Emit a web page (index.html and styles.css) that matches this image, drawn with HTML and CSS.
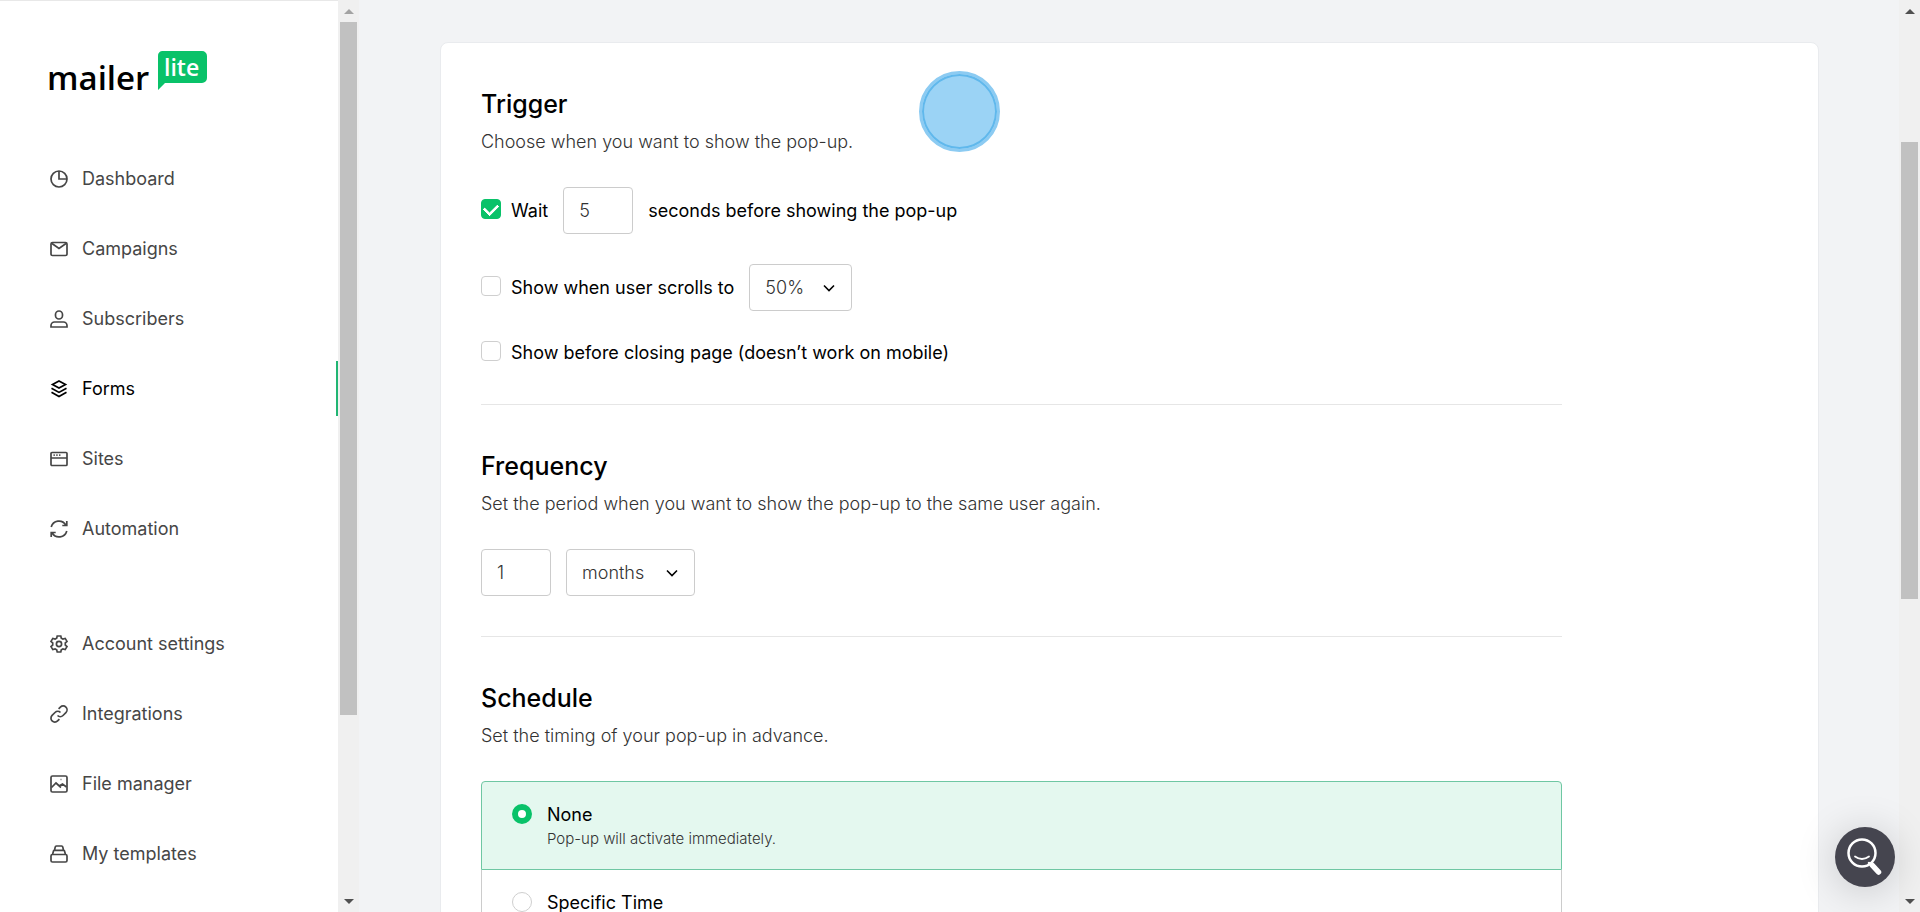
FILE: index.html
```
<!DOCTYPE html>
<html lang="en">
<head>
  <meta charset="UTF-8">
  <title>MailerLite - Pop-up settings</title>
  <link rel="stylesheet" href="styles.css">
</head>
<body>
  <div class="app">
    <aside class="sidebar">
      <a href="#" class="logo" aria-label="MailerLite">
        <svg width="160" height="42" viewBox="0 0 160 42">
          <text class="logo-mailer" x="-3" y="39">mailer</text>
          <path fill="#09c269" d="M112 0h40a5 5 0 0 1 5 5v22a5 5 0 0 1-5 5h-37l-7 7V5a5 5 0 0 1 4-5z"/>
          <text class="logo-lite" x="114" y="25">lite</text>
        </svg>
      </a>

      <nav class="menu">
        <a href="#" class="menu-item">
          <svg class="icon" viewBox="0 0 18 18"><circle cx="9" cy="9" r="8"/><path d="M9 1v8h8"/></svg>
          Dashboard
        </a>
        <a href="#" class="menu-item">
          <svg class="icon" viewBox="0 0 18 18"><rect x="1" y="2.500" width="16" height="13" rx="1.500"/><path d="M2 3.500l7 5 7-5"/></svg>
          Campaigns
        </a>
        <a href="#" class="menu-item">
          <svg class="icon" viewBox="0 0 18 18"><rect x="5.500" y="1" width="7" height="8" rx="3.500"/><path d="M1 17v-1.500a3.500 3.500 0 0 1 3.500-3.500h9a3.500 3.500 0 0 1 3.500 3.500V17z"/></svg>
          Subscribers
        </a>
        <a href="#" class="menu-item active">
          <svg class="icon" viewBox="0 0 18 18"><path d="M9 1l6.500 3.500L9 8 2.500 4.500zM1.500 8.200L9 12.400l7.500-4.200M1.500 12.200L9 16.500l7.500-4.300"/></svg>
          Forms
        </a>
        <a href="#" class="menu-item">
          <svg class="icon" viewBox="0 0 18 18"><rect x="1" y="2.500" width="16" height="13" rx="1"/><path d="M1 8h16M3.500 5.200h1.300M6.300 5.200h1.300M9.100 5.200h1.300"/></svg>
          Sites
        </a>
        <a href="#" class="menu-item">
          <svg class="icon" viewBox="0 0 18 18"><path d="M1.200 7A8 8 0 0 1 15.800 5M16.800 1v4.500h-4.500M16.800 11A8 8 0 0 1 2.200 13M1.200 17v-4.500h4.500"/></svg>
          Automation
        </a>
      </nav>

      <nav class="menu">
        <a href="#" class="menu-item">
          <svg class="icon" viewBox="0 0 18 18"><path d="M7.200 1h3.600l.5 2.200 1.600.9 2.300-.7 1.800 3-1.700 1.500v2.200l1.700 1.500-1.800 3-2.300-.7-1.600.9-.5 2.200H7.200l-.5-2.200-1.600-.9-2.300.7-1.800-3 1.700-1.500V7.900L1 6.400l1.800-3 2.300.7 1.600-.9z"/><circle cx="9" cy="9" r="2.600"/></svg>
          Account settings
        </a>
        <a href="#" class="menu-item">
          <svg class="icon" viewBox="0 0 18 18"><path d="M7.500 10.500a3.900 3.900 0 0 0 5.500 0l2.900-2.900a3.800 3.800 0 0 0-5.500-5.500L8.600 3.900M10.500 7.500a3.900 3.900 0 0 0-5.500 0l-2.900 2.900a3.800 3.800 0 0 0 5.500 5.500l1.800-1.800"/></svg>
          Integrations
        </a>
        <a href="#" class="menu-item">
          <svg class="icon" viewBox="0 0 18 18"><rect x="1" y="1" width="16" height="16" rx="1.500"/><path d="M1.500 12.500L6 8l5 4.500M9.500 10.800L12.500 9l4 3M10.600 4.500h.8"/></svg>
          File manager
        </a>
        <a href="#" class="menu-item">
          <svg class="icon" viewBox="0 0 18 18"><rect x="1" y="9.500" width="16" height="7.500" rx="1.500"/><path d="M2.500 9.500l1-3.400a1 1 0 0 1 1-.8h9a1 1 0 0 1 1 .8l1 3.400M4.500 5.300l.7-3.200A1.300 1.300 0 0 1 6.400 1h5.200a1.300 1.300 0 0 1 1.200 1.100l.7 3.200"/></svg>
          My templates
        </a>
      </nav>
    </aside>

    <div class="scrollbar scrollbar-side">
      <div class="arrow-up"></div>
      <div class="thumb"></div>
      <div class="track-rest"></div>
      <div class="arrow-down"></div>
    </div>

    <main class="content">
      <form class="card">
        <section class="section">
          <h2>Trigger</h2>
          <p class="description">Choose when you want to show the pop-up.</p>
          <div class="rows">
            <div class="row">
              <input type="checkbox" id="wait" checked>
              <label for="wait">Wait</label>
              <input type="text" class="field" id="seconds" value="5">
              <label for="seconds">seconds before showing the pop-up</label>
            </div>
            <div class="row">
              <input type="checkbox" id="scrolls">
              <label for="scrolls">Show when user scrolls to</label>
              <div class="select-box">
                <select class="field" aria-label="Scroll position">
                  <option>25%</option>
                  <option selected>50%</option>
                  <option>75%</option>
                </select>
                <svg class="chevron" viewBox="0 0 12 8"><path d="M1 1.500l5 5 5-5"/></svg>
              </div>
            </div>
            <div class="row">
              <input type="checkbox" id="closing">
              <label for="closing">Show before closing page (doesn’t work on mobile)</label>
            </div>
          </div>
        </section>

        <section class="section">
          <h2>Frequency</h2>
          <p class="description">Set the period when you want to show the pop-up to the same user again.</p>
          <div class="row">
            <input type="text" class="field" value="1" aria-label="Period">
            <div class="select-box select-wide">
              <select class="field" aria-label="Period unit">
                <option>days</option>
                <option>weeks</option>
                <option selected>months</option>
              </select>
              <svg class="chevron" viewBox="0 0 12 8"><path d="M1 1.500l5 5 5-5"/></svg>
            </div>
          </div>
        </section>

        <section class="section">
          <h2>Schedule</h2>
          <p class="description">Set the timing of your pop-up in advance.</p>
          <div class="options">
            <label class="option selected">
              <input type="radio" name="schedule" checked>
              <span class="option-text">None<small>Pop-up will activate immediately.</small></span>
            </label>
            <label class="option">
              <input type="radio" name="schedule">
              <span class="option-text">Specific Time</span>
            </label>
          </div>
        </section>
      </form>
    </main>

    <div class="scrollbar scrollbar-page">
      <div class="arrow-up"></div>
      <div class="track-before"></div>
      <div class="thumb"></div>
      <div class="track-rest"></div>
      <div class="arrow-down"></div>
    </div>
  </div>

  <div class="pointer"></div>

  <button class="help" aria-label="Help">
    <svg width="36" height="38" viewBox="0 0 36 38">
      <circle cx="15" cy="15" r="13.500" stroke-width="2.500"/>
      <path stroke-width="1.800" d="M8 18.500q7 5 14 0"/>
      <path stroke-width="2.500" d="M22 25l3 2"/>
      <path stroke-width="5.500" d="M25.500 27.500L31.500 34"/>
    </svg>
  </button>
</body>
</html>
```
FILE: styles.css
```
* {
  box-sizing: border-box;
}

body {
  margin: 0;
  font-family: Inter, "Liberation Sans", sans-serif;
  font-size: 18px;
  color: #000;
  background: #f2f3f5;
}

.app {
  display: flex;
  height: 100vh;
  overflow: hidden;
}

/* sidebar */
.sidebar {
  width: 338px;
  flex-shrink: 0;
  background: #fff;
  border-top: 1px solid #e8e8e8;
  padding-top: 50px;
  overflow: hidden;
}

.logo {
  display: block;
  height: 100px;
  padding-left: 50px;
}

.logo svg {
  display: block;
  overflow: visible;
}

.logo text {
  font-family: "Open Sans", "Noto Sans", sans-serif;
  font-weight: 600;
}

.logo-mailer {
  font-size: 33px;
}

.logo-lite {
  font-size: 23px;
  fill: #fff;
}

.menu {
  display: flex;
  flex-direction: column;
  gap: 15px;
  margin-bottom: 60px;
}

.menu-item {
  display: flex;
  align-items: center;
  gap: 14px;
  height: 55px;
  padding-left: 50px;
  border-right: 2px solid transparent;
  color: #464646;
  text-decoration: none;
}

.menu-item.active {
  color: #000;
  border-right-color: #21b573;
}

.icon {
  width: 18px;
  height: 18px;
  fill: none;
  stroke: currentColor;
  stroke-width: 1.7;
}

/* scrollbars */
.scrollbar {
  display: flex;
  flex-direction: column;
  flex-shrink: 0;
  width: 21px;
  padding: 0 2px;
  background: #f0f0f0;
}

.thumb {
  width: 17px;
  background: #c1c1c1;
}

.scrollbar-side .thumb {
  flex: 693;
}

.scrollbar-side .track-rest {
  flex: 175;
}

.scrollbar-page .track-before {
  flex: 120;
}

.scrollbar-page .thumb {
  flex: 457;
}

.scrollbar-page .track-rest {
  flex: 291;
}

.arrow-up,
.arrow-down {
  display: flex;
  align-items: center;
  justify-content: center;
  height: 22px;
}

.arrow-up::before,
.arrow-down::before {
  content: "";
  border: 5px solid transparent;
}

.arrow-up::before {
  border-bottom-color: #505050;
  border-top: 0;
}

.arrow-down::before {
  border-top-color: #505050;
  border-bottom: 0;
}

.scrollbar-side .arrow-up::before {
  border-bottom-color: #a3a3a3;
}

/* content */
.content {
  flex: 1;
  padding: 42px 80px 0 81px;
  overflow: hidden;
}

.card {
  background: #fff;
  border: 1px solid #e9ebee;
  border-radius: 8px;
  padding: 0 40px;
}

.section {
  width: 83.33%;
  padding: 46px 0 40px;
}

.section + .section {
  border-top: 1px solid #e6e6e6;
}

h2 {
  margin: 0 0 11px;
  font-size: 25px;
  font-weight: 500;
  line-height: 30px;
}

.description {
  margin: 0 0 33px;
  font-weight: 300;
  line-height: 24px;
  color: #333;
}

.rows {
  display: flex;
  flex-direction: column;
  gap: 30px;
}

.row {
  display: flex;
  align-items: center;
  min-height: 23px;
}

.row .field + label,
.row .field + .select-box,
.row label + .field,
.row label + .select-box {
  margin-left: 15px;
}

input[type="checkbox"],
input[type="radio"] {
  appearance: none;
  flex-shrink: 0;
  width: 20px;
  height: 20px;
  margin: 0 10px 0 0;
  border: 1px solid #cfcfcf;
  border-radius: 4px;
  background: #fff;
}

input[type="checkbox"] {
  margin-bottom: 3px;
}

input[type="checkbox"]:checked {
  display: flex;
  align-items: center;
  justify-content: center;
  background: #09c269;
  border-color: #09c269;
}

input[type="checkbox"]:checked::before {
  content: "";
  width: 11px;
  height: 7px;
  margin-bottom: 3px;
  border-left: 3px solid #fff;
  border-bottom: 3px solid #fff;
  border-radius: 1px;
  transform: rotate(-45deg);
}

.field {
  width: 70px;
  height: 47px;
  padding: 0 15px;
  border: 1px solid #ccc;
  border-radius: 4px;
  background: #fff;
  font: inherit;
  font-weight: 300;
  color: #333;
}

.select-box {
  position: relative;
  width: 103px;
}

.select-wide {
  width: 129px;
}

select.field {
  appearance: none;
  width: 100%;
}

.chevron {
  position: absolute;
  top: 20px;
  right: 17px;
  width: 12px;
  height: 8px;
  fill: none;
  stroke: #000;
  stroke-width: 1.6;
  pointer-events: none;
}

/* schedule options */
.option {
  display: flex;
  align-items: flex-start;
  height: 88px;
  padding: 22px 30px;
  border: 1px solid #ccc;
  border-top: 0;
}

.option.selected {
  height: 89px;
  background: #e4f8ef;
  border: 1px solid #6fc7a3;
  border-radius: 4px 4px 0 0;
}

input[type="radio"] {
  margin-right: 15px;
  border-radius: 50%;
}

input[type="radio"]:checked {
  border: 6px solid #09c269;
}

.option-text {
  line-height: 22px;
}

.option-text small {
  display: block;
  margin-top: 2px;
  font-size: 15px;
  font-weight: 300;
  color: #333;
}

/* floating things */
.pointer {
  position: fixed;
  top: 71px;
  left: 50%;
  width: 81px;
  height: 81px;
  margin-left: -41px;
  border: 3px solid #8ccbf2;
  border-radius: 50%;
  background: #9bd3f5;
  box-shadow: inset 0 0 0 2px #60b8ec;
}

.help {
  position: fixed;
  right: 25px;
  bottom: 25px;
  display: flex;
  align-items: center;
  justify-content: center;
  width: 60px;
  height: 60px;
  padding: 0;
  border: 0;
  border-radius: 50%;
  background: #45454f;
  box-shadow: 0 4px 40px rgba(0, 0, 0, 0.18);
}

.help svg {
  fill: none;
  stroke: #fff;
  stroke-linecap: round;
}
```
